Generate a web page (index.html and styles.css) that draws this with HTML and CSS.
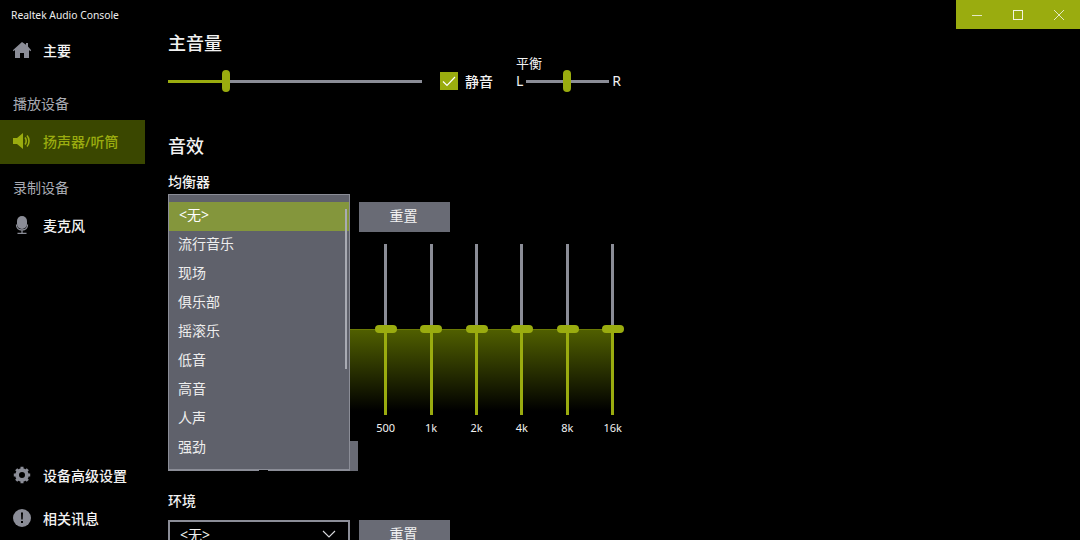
FILE: index.html
```html
<!DOCTYPE html>
<html lang="zh-CN">
<head>
    <meta charset="UTF-8">
    <title>Realtek Audio Console</title>
    <link rel="stylesheet" href="styles.css">
</head>
<body>
    <div class="titlebar">
        <span class="app-title">Realtek Audio Console</span>
        <div class="window-controls">
            <button class="win-btn"><svg width="12" height="12" viewBox="0 0 12 12"><path d="M1 6.500h10" stroke="#e4e8c4" stroke-width="1"/></svg></button>
            <button class="win-btn"><svg width="12" height="12" viewBox="0 0 12 12"><rect x="1.500" y="1.500" width="9" height="9" fill="none" stroke="#f2f4e0" stroke-width="1"/></svg></button>
            <button class="win-btn"><svg width="12" height="12" viewBox="0 0 12 12"><path d="M1 1l10 10M11 1L1 11" stroke="#e4e8c4" stroke-width="1"/></svg></button>
        </div>
    </div>

    <div class="app">
        <nav class="sidebar">
            <a class="nav-item nav-first">
                <svg class="nav-icon" width="20" height="18" viewBox="0 0 20 18"><path d="M10 1L0.800 9.200l.9 1L3 9.100V17h5v-5h4v5h5V9.100l1.300 1.100.9-1L16 5.600V2h-2v1.800z" fill="#8b8d97"/></svg>
                <span>主要</span>
            </a>
            <div class="nav-label">播放设备</div>
            <a class="nav-item active">
                <svg class="nav-icon" width="20" height="18" viewBox="0 0 20 18"><path d="M1 6h4l6-5v16l-6-5H1z" fill="#9aac0f"/><path d="M13 5.500c1.600 1.800 1.600 5.200 0 7M15 3.500c2.700 3 2.700 8 0 11" fill="none" stroke="#9aac0f" stroke-width="1.600"/></svg>
                <span>扬声器/听筒</span>
            </a>
            <div class="nav-label">录制设备</div>
            <a class="nav-item">
                <svg class="nav-icon" width="20" height="18" viewBox="0 0 20 18"><rect x="5" y="0" width="10" height="13" rx="5" fill="#8b8d97"/><path d="M4.500 8.500c0 3.500 2.300 5.500 5.500 5.500s5.500-2 5.500-5.500M10 14v3M5.500 17.300h9" fill="none" stroke="#8b8d97" stroke-width="1.300"/></svg>
                <span>麦克风</span>
            </a>
            <div class="nav-footer">
                <a class="nav-item nav-small">
                    <svg class="nav-icon" width="20" height="20" viewBox="0 0 20 20"><path d="M10 3.200a6.800 6.800 0 1 0 0 13.600 6.800 6.800 0 0 0 0-13.600zm0 3.800a3 3 0 1 1 0 6 3 3 0 0 1 0-6z" fill="#8b8d97" fill-rule="evenodd"/><path d="M10 1.800v3M10 15.200v3M1.800 10h3M15.200 10h3M4.200 4.200l2.100 2.100M13.700 13.700l2.100 2.100M15.800 4.200l-2.100 2.100M6.300 13.700l-2.100 2.100" stroke="#8b8d97" stroke-width="3"/></svg>
                    <span>设备高级设置</span>
                </a>
                <a class="nav-item nav-small">
                    <svg class="nav-icon" width="20" height="20" viewBox="0 0 20 20"><circle cx="10" cy="10" r="9" fill="#8b8d97"/><path d="M9 4.500h2l-.3 7h-1.400z" fill="#000"/><rect x="9" y="13" width="2" height="2" fill="#000"/></svg>
                    <span>相关讯息</span>
                </a>
            </div>
        </nav>

        <main class="content">
            <h2 class="heading">主音量</h2>
            <div class="master-row">
                <div class="slider master-slider">
                    <div class="track-on master-on"></div>
                    <div class="track-off"></div>
                    <div class="thumb master-thumb"></div>
                </div>
                <label class="mute">
                    <span class="checkbox"><svg width="18" height="18" viewBox="0 0 18 18"><path d="M3 9.500l4 4 8-8.500" fill="none" stroke="#fff" stroke-width="1.200"/></svg></span>
                    <span>静音</span>
                </label>
                <div class="balance">
                    <div class="balance-label">平衡</div>
                    <div class="balance-row">
                        <span class="balance-end">L</span>
                        <div class="slider balance-slider">
                            <div class="track-off"></div>
                            <div class="thumb balance-thumb"></div>
                        </div>
                        <span class="balance-end">R</span>
                    </div>
                </div>
            </div>

            <h2 class="heading heading-effects">音效</h2>
            <div class="field-label">均衡器</div>
            <div class="select-row">
                <div class="select select-open">
                    <ul class="dropdown">
                        <li class="selected">&lt;无&gt;</li>
                        <li>流行音乐</li>
                        <li>现场</li>
                        <li>俱乐部</li>
                        <li>摇滚乐</li>
                        <li>低音</li>
                        <li>高音</li>
                        <li>人声</li>
                        <li>强劲</li>
                    </ul>
                    <div class="scrollbar"></div>
                </div>
                <button class="reset">重置</button>
            </div>

            <div class="eq">
                <div class="eq-fill"></div>
                <div class="band"><div class="band-off"></div><div class="band-on"></div><div class="band-thumb"></div><span class="band-label">500</span></div>
                <div class="band"><div class="band-off"></div><div class="band-on"></div><div class="band-thumb"></div><span class="band-label">1k</span></div>
                <div class="band"><div class="band-off"></div><div class="band-on"></div><div class="band-thumb"></div><span class="band-label">2k</span></div>
                <div class="band"><div class="band-off"></div><div class="band-on"></div><div class="band-thumb"></div><span class="band-label">4k</span></div>
                <div class="band"><div class="band-off"></div><div class="band-on"></div><div class="band-thumb"></div><span class="band-label">8k</span></div>
                <div class="band"><div class="band-off"></div><div class="band-on"></div><div class="band-thumb"></div><span class="band-label">16k</span></div>
            </div>
            <div class="eq-button"><span class="eq-notch"></span></div>

            <div class="field-label field-env">环境</div>
            <div class="select-row">
                <div class="select">
                    <span>&lt;无&gt;</span>
                    <svg width="14" height="8" viewBox="0 0 14 8"><path d="M1 1l6 6 6-6" fill="none" stroke="#d8d9dd" stroke-width="1.100"/></svg>
                </div>
                <button class="reset">重置</button>
            </div>
        </main>
    </div>
</body>
</html>
```

FILE: styles.css
```css
* { box-sizing: border-box; }
html, body { margin: 0; height: 540px; overflow: hidden; }
body { width: 1080px; background: #000; color: #f2f2f2; font-family: "Noto Sans", "Noto Sans CJK SC", sans-serif; font-size: 14px; }

.titlebar { display: flex; justify-content: space-between; height: 29px; }
.app-title { padding: 8px 0 0 11px; font-size: 10.3px; line-height: 14px; color: #eee; }
.window-controls { display: flex; width: 124px; background: #9aac0f; }
.win-btn { flex: 1; display: flex; align-items: center; justify-content: center; padding: 0; border: none; background: none; }

.app { display: flex; height: 511px; }

.sidebar { display: flex; flex-direction: column; flex: 0 0 145px; }
.nav-item { display: flex; align-items: center; height: 44px; padding: 0 0 2px 12px; color: #f2f2f2; font-weight: 500; }
.nav-icon { flex: none; margin-right: 11px; }
.nav-first { margin-bottom: 19px; }
.nav-label { height: 24px; line-height: 24px; margin-bottom: 4px; padding-left: 13px; color: #a9abb3; }
.active { margin-bottom: 12px; background: #3a4700; color: #9aac0f; }
.nav-footer { display: flex; flex-direction: column; gap: 1px; margin-top: auto; }
.nav-small { height: 42px; }

.content { flex: 1; padding: 2px 0 0 23px; }
.heading { margin: 0; height: 24px; font-size: 18px; line-height: 24px; font-weight: 500; }
.heading-effects { margin-top: 37px; }

.master-row { display: flex; align-items: flex-start; height: 42px; }
.slider { position: relative; display: flex; align-items: center; height: 22px; }
.master-slider { width: 254px; margin-top: 15px; }
.balance-slider { width: 83px; }
.track-on { height: 3px; background: #9aac0f; }
.master-on { width: 58px; }
.track-off { flex: 1; height: 3px; background: #8b8d97; }
.thumb { position: absolute; top: 0; width: 8px; height: 22px; border-radius: 4px; background: #9aac0f; }
.master-thumb { left: 54px; }
.balance-thumb { left: 37px; }

.mute { display: flex; align-items: center; gap: 7px; height: 18px; margin: 17px 23px 0 18px; font-weight: 500; }
.checkbox { display: block; width: 18px; height: 18px; background: #9aac0f; }
.checkbox svg { display: block; }

.balance-label { height: 15px; line-height: 17px; font-size: 13px; }
.balance-row { display: flex; align-items: center; gap: 3px; height: 22px; font-size: 14px; }
.balance-end { padding-bottom: 2px; }

.field-label { height: 20px; line-height: 20px; margin: 14px 0 10px; font-weight: 500; }
.field-env { margin: 20px 0 9px; }

.select-row { display: flex; gap: 9px; }
.select { position: relative; display: flex; align-items: center; justify-content: space-between; width: 182px; height: 30px; padding: 0 12px 2px 10px; border: 2px solid #8b8d97; }
.reset { width: 91px; height: 30px; padding: 0 2px 4px 0; border: none; background: #696b75; color: #f2f2f2; font: inherit; }

/* open list lies over the eq and the button below it */
.dropdown { position: absolute; z-index: 2; left: -2px; top: -10px; width: 182px; height: 277px; margin: 0; padding: 7px 0 0; border: 1px solid #8b8d97; border-bottom-width: 2px; background: #5f616b; list-style: none; }
.dropdown li { height: 29px; line-height: 25px; padding-left: 9px; color: #eee; }
.dropdown .selected { padding-left: 10px; background: #84963c; color: #fff; }
.scrollbar { position: absolute; z-index: 3; right: 1px; top: 5px; width: 2px; height: 160px; background: #a9abb3; }

.eq { position: relative; display: flex; margin-top: 12px; padding-left: 195px; height: 197px; }
.eq-fill { position: absolute; left: 0; width: 445px; top: 85px; height: 86px; border-top: 1px solid #6b7a05; background: linear-gradient(#505f00, #000 95%); }
.band { position: relative; display: flex; flex-direction: column; align-items: center; width: 45.4px; }
.band-off { position: relative; width: 3px; height: 85px; background: #8b8d97; }
.band-on { position: relative; width: 3px; height: 86px; background: #9aac0f; }
.band-thumb { position: absolute; top: 81px; left: 12px; width: 22px; height: 8px; border-radius: 4px; background: #9aac0f; }
.band-label { height: 26px; line-height: 26px; font-size: 11px; }

.eq-button { position: relative; width: 190px; height: 30px; background: #696b75; }
.eq-notch { position: absolute; z-index: 3; left: 91px; bottom: -1px; width: 9px; height: 2px; background: #000; }
```
